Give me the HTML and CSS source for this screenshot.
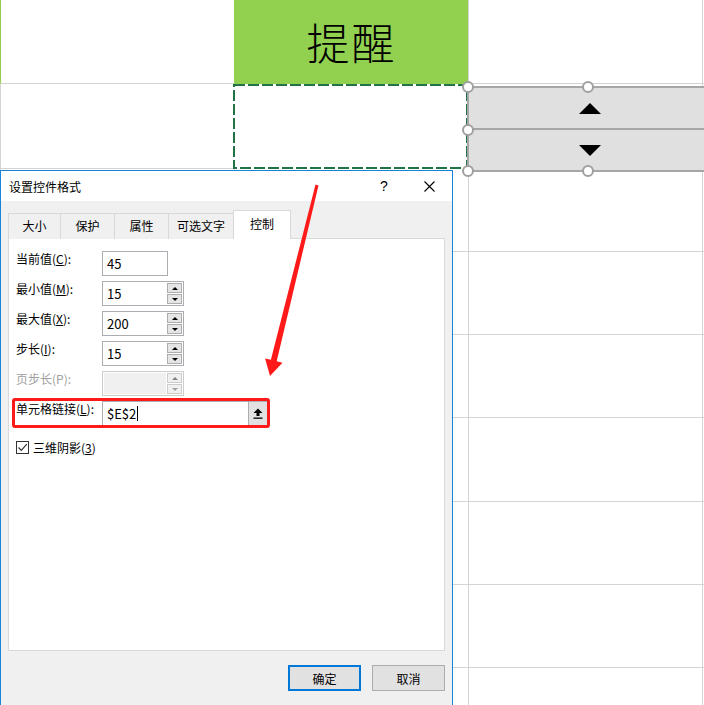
FILE: index.html
```html
<!DOCTYPE html>
<html lang="zh-CN">
<head>
    <meta charset="UTF-8">
    <title>设置控件格式</title>
    <link rel="stylesheet" href="styles.css">
</head>
<body>
    <div class="sheet">
        <div class="cell cell-first-green"></div>
        <div class="cell cell-title">提醒</div>
        <div class="cell"></div>
        <div class="cell"></div>

        <div class="cell"></div>
        <div class="cell cell-copy">
            <svg class="ants" width="234" height="85">
                <rect x="1" y="1" width="233" height="83" fill="none" stroke="#217346" stroke-width="2" stroke-dasharray="11 3"/>
            </svg>
        </div>
        <div class="cell"></div>
        <div class="cell"></div>

        <div class="cell"></div><div class="cell"></div><div class="cell"></div><div class="cell"></div>
        <div class="cell"></div><div class="cell"></div><div class="cell"></div><div class="cell"></div>
        <div class="cell"></div><div class="cell"></div><div class="cell"></div><div class="cell"></div>
        <div class="cell"></div><div class="cell"></div><div class="cell"></div><div class="cell"></div>
        <div class="cell"></div><div class="cell"></div><div class="cell"></div><div class="cell"></div>
        <div class="cell"></div><div class="cell"></div><div class="cell"></div><div class="cell"></div>
        <div class="cell"></div><div class="cell"></div><div class="cell"></div><div class="cell"></div>
    </div>

    <!-- spin button form control drawn on the sheet -->
    <div class="spin-shape">
        <div class="spin-half"><span class="tri-up"></span></div>
        <div class="spin-half"><span class="tri-down"></span></div>
        <span class="handle h-tl"></span>
        <span class="handle h-tm"></span>
        <span class="handle h-ml"></span>
        <span class="handle h-bl"></span>
        <span class="handle h-bm"></span>
    </div>

    <div class="dialog">
        <div class="titlebar">
            <span class="title">设置控件格式</span>
            <span class="help">?</span>
            <span class="close">
                <svg width="11" height="11" viewBox="0 0 11 11">
                    <path d="M0.5 0.5 L10.5 10.5 M10.5 0.5 L0.5 10.5" stroke="#000" stroke-width="1.1"/>
                </svg>
            </span>
        </div>
        <div class="dialog-body">
            <div class="tabs">
                <div class="tab tab-a">大小</div>
                <div class="tab tab-b">保护</div>
                <div class="tab tab-b">属性</div>
                <div class="tab tab-c">可选文字</div>
                <div class="tab tab-active">控制</div>
            </div>
            <div class="pane">
                <div class="field">
                    <label class="label">当前值(<u>C</u>):</label>
                    <div class="box box-short"><span class="val">45</span></div>
                </div>
                <div class="field">
                    <label class="label">最小值(<u>M</u>):</label>
                    <div class="box box-spin">
                        <span class="val">15</span>
                        <div class="spin">
                            <span class="sbtn"><i class="mini-up"></i></span>
                            <span class="sbtn"><i class="mini-down"></i></span>
                        </div>
                    </div>
                </div>
                <div class="field">
                    <label class="label">最大值(<u>X</u>):</label>
                    <div class="box box-spin">
                        <span class="val">200</span>
                        <div class="spin">
                            <span class="sbtn"><i class="mini-up"></i></span>
                            <span class="sbtn"><i class="mini-down"></i></span>
                        </div>
                    </div>
                </div>
                <div class="field">
                    <label class="label">步长(<u>I</u>):</label>
                    <div class="box box-spin">
                        <span class="val">15</span>
                        <div class="spin">
                            <span class="sbtn"><i class="mini-up"></i></span>
                            <span class="sbtn"><i class="mini-down"></i></span>
                        </div>
                    </div>
                </div>
                <div class="field field-off">
                    <label class="label">页步长(P):</label>
                    <div class="box box-spin box-off">
                        <span class="val"></span>
                        <div class="spin">
                            <span class="sbtn"><i class="mini-up"></i></span>
                            <span class="sbtn"><i class="mini-down"></i></span>
                        </div>
                    </div>
                </div>
                <div class="field field-link">
                    <label class="label">单元格链接(<u>L</u>):</label>
                    <div class="box box-link">
                        <span class="val">$E$2<span class="caret"></span></span>
                        <span class="pick">
                            <svg width="10" height="11" viewBox="0 0 10 11">
                                <path d="M5 0.5 L9.5 5 L6.5 5 L6.5 8 L3.5 8 L3.5 5 L0.5 5 Z" fill="#000"/>
                                <rect x="0.5" y="9.5" width="9" height="1.3" fill="#000"/>
                            </svg>
                        </span>
                    </div>
                </div>
                <div class="check-row">
                    <span class="checkbox">
                        <svg width="11" height="11" viewBox="0 0 11 11">
                            <path d="M1.5 5.5 L4.3 8.3 L9.8 2.2" fill="none" stroke="#333" stroke-width="1.2"/>
                        </svg>
                    </span>
                    <span>三维阴影(<u>3</u>)</span>
                </div>
            </div>
            <div class="actions">
                <button class="btn btn-default">确定</button>
                <button class="btn">取消</button>
            </div>
        </div>
    </div>

    <!-- red annotation arrow -->
    <svg class="arrow" width="704" height="705">
        <polygon points="315.5,184.6 318.5,185.4 276.7,361.2 282.5,362.7 270,376 265.1,358.4 270.9,359.8" fill="#FF1A1A"/>
    </svg>
</body>
</html>
```

FILE: styles.css
```css
body {
    margin: 0;
    width: 704px;
    height: 705px;
    overflow: hidden;
    background: #fff;
    position: relative;
    font-family: "Noto Sans CJK SC", "Noto Sans", sans-serif;
    font-size: 12px;
    color: #000;
}

/* worksheet */
.sheet {
    display: grid;
    grid-template-columns: 234px 234px 234px 2px;
    grid-template-rows: 84px 85px 83px 83px 83px 84px 83px 83px 38px;
}
.cell {
    box-sizing: border-box;
    border-left: 1px solid #D4D4D4;
    border-bottom: 1px solid #D4D4D4;
}
.cell-first-green {
    border-left-color: #92D050;
}
.cell-title {
    background: #92D050;
    border-left-color: #92D050;
    border-bottom-color: #92D050;
    display: flex;
    align-items: center;
    justify-content: center;
    font-size: 43px;
    font-weight: 300;
    letter-spacing: 2px;
    padding-bottom: 2px;
}
.cell-copy {
    border: none;
    position: relative;
}
.ants {
    display: block;
    margin-left: -1px;
}

/* spinner control on the sheet */
.spin-shape {
    position: absolute;
    left: 467px;
    top: 86px;
    width: 237px;
    height: 86px;
    box-sizing: border-box;
    border: 2px solid #A6A6A6;
    border-right: none;
    background: #E0E0E0;
    display: flex;
    flex-direction: column;
}
.spin-half {
    flex: 1;
    display: flex;
    align-items: center;
    justify-content: flex-start;
    padding-left: 110px;
}
.spin-half + .spin-half {
    border-top: 2px solid #A6A6A6;
}
.tri-up {
    width: 0;
    height: 0;
    border-left: 11px solid transparent;
    border-right: 11px solid transparent;
    border-bottom: 11px solid #000;
}
.tri-down {
    width: 0;
    height: 0;
    border-left: 11px solid transparent;
    border-right: 11px solid transparent;
    border-top: 11px solid #000;
}
.handle {
    position: absolute;
    width: 8px;
    height: 8px;
    border: 2px solid #A0A0A0;
    border-radius: 50%;
    background: #fff;
}
.h-tl { left: -7px; top: -7px; }
.h-tm { left: 113px; top: -7px; }
.h-ml { left: -7px; top: 36px; }
.h-bl { left: -7px; bottom: -7px; }
.h-bm { left: 113px; bottom: -7px; }

/* dialog */
.dialog {
    position: absolute;
    left: 0;
    top: 170px;
    width: 453px;
    height: 535px;
    box-sizing: border-box;
    border: 1px solid #1883D7;
    border-bottom: none;
    background: #F0F0F0;
    display: flex;
    flex-direction: column;
}
.titlebar {
    height: 30px;
    background: #fff;
    display: flex;
    align-items: center;
    padding-left: 8px;
}
.title {
    flex: 1;
}
.help {
    width: 30px;
    text-align: center;
    font-family: "Liberation Sans", sans-serif;
    font-size: 14px;
    margin-right: 7px;
}
.close {
    width: 46px;
    display: flex;
    justify-content: center;
}
.dialog-body {
    padding: 9px 7px 0 7px;
}
.tabs {
    display: flex;
    align-items: flex-end;
    height: 28px;
}
.tab {
    box-sizing: border-box;
    height: 26px;
    border: 1px solid #D9D9D9;
    border-bottom: none;
    display: flex;
    align-items: center;
    justify-content: center;
    margin-bottom: -1px;
    background: #F0F0F0;
    padding-bottom: 3px;
}
.tab + .tab {
    margin-left: -1px;
}
.tab-a { width: 53px; }
.tab-b { width: 55px; }
.tab-c { width: 66px; }
.tab-active {
    width: 58px;
    height: 29px;
    background: #fff;
    position: relative;
    z-index: 1;
    padding-bottom: 3px;
}
.pane {
    box-sizing: border-box;
    height: 413px;
    background: #fff;
    border: 1px solid #D9D9D9;
    padding: 12px 7px;
}
.field {
    display: flex;
    align-items: flex-start;
    height: 25px;
    margin-bottom: 5px;
}
.label {
    width: 86px;
    line-height: 16px;
}
.label u {
    text-underline-offset: 1px;
}
.box {
    box-sizing: border-box;
    height: 25px;
    border: 1px solid #ABADB3;
    background: #fff;
    display: flex;
    align-items: stretch;
}
.val {
    flex: 1;
    display: flex;
    align-items: center;
    padding-left: 4px;
    font-size: 13px;
}
.box-short { width: 66px; }
.box-spin { width: 82px; }
.spin {
    width: 15px;
    display: flex;
    flex-direction: column;
    gap: 1px;
    padding: 1px 1px 1px 0;
}
.sbtn {
    flex: 1;
    box-sizing: border-box;
    border: 1px solid #ADADAD;
    background: #E5E5E5;
    display: flex;
    align-items: center;
    justify-content: center;
}
.mini-up {
    width: 0;
    height: 0;
    border-left: 3px solid transparent;
    border-right: 3px solid transparent;
    border-bottom: 3px solid #000;
}
.mini-down {
    width: 0;
    height: 0;
    border-left: 3px solid transparent;
    border-right: 3px solid transparent;
    border-top: 3px solid #000;
}
.field-off .label {
    color: #A0A0A0;
}
.box-off {
    border-color: #CCCCCC;
}
.box-off .val {
    background: #F0F0F0;
    margin: 1px;
}
.box-off .sbtn {
    border-color: #CCCCCC;
    background: #F0F0F0;
}
.box-off .mini-up { border-bottom-color: #838383; }
.box-off .mini-down { border-top-color: #A0A0A0; }

.field-link {
    position: relative;
    width: max-content;
}
.field-link::after {
    content: "";
    position: absolute;
    left: -4px;
    right: -2px;
    top: -3px;
    bottom: -2px;
    border: 3px solid #FF1A1A;
    border-radius: 3px;
}
.box-link {
    width: 166px;
}
.caret {
    display: inline-block;
    width: 1px;
    height: 15px;
    background: #000;
    margin-left: 1px;
}
.pick {
    width: 18px;
    background: #E1E1E1;
    border-left: 1px solid #ADADAD;
    display: flex;
    align-items: center;
    justify-content: center;
}
.check-row {
    display: flex;
    align-items: center;
    gap: 4px;
    margin-top: 13px;
}
.checkbox {
    box-sizing: border-box;
    width: 13px;
    height: 13px;
    border: 1px solid #333;
    display: flex;
    align-items: center;
    justify-content: center;
}
.actions {
    display: flex;
    justify-content: flex-end;
    gap: 11px;
    margin-top: 14px;
}
.btn {
    box-sizing: border-box;
    width: 73px;
    height: 26px;
    border: 1px solid #ADADAD;
    background: #E1E1E1;
    font-family: inherit;
    font-size: 12px;
    padding: 0;
    color: #000;
}
.btn-default {
    border: 2px solid #0078D7;
}

.arrow {
    position: absolute;
    left: 0;
    top: 0;
    pointer-events: none;
}
```
